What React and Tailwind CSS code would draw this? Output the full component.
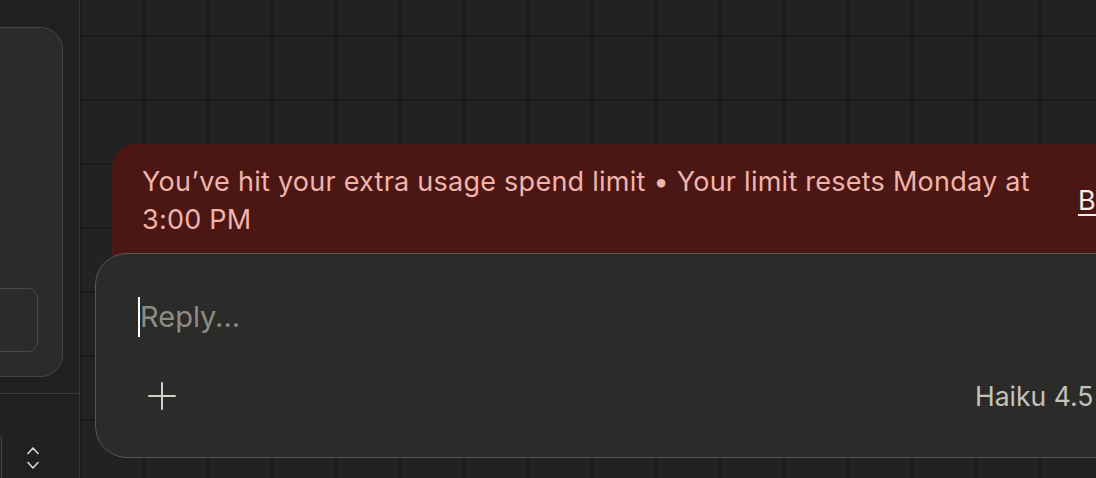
export default function App() {
  return (
    <div className="flex h-[478px] w-[1096px] overflow-hidden bg-[#212121] font-['Inter',sans-serif]">
      {/* left rail */}
      <aside className="flex w-[80px] shrink-0 flex-col border-r border-[#373737] bg-[#202020] pt-[27px]">
        <div className="-ml-[20px] flex h-[350px] w-[83px] shrink-0 flex-col justify-end rounded-[22px] border border-[#454545] bg-[#2b2b2b] pb-[24px]">
          <div className="h-[64px] w-[57px] rounded-[10px] border border-[#4a4a4a]"></div>
        </div>
        <div className="mt-[16px] shrink-0 border-t border-[#383838]"></div>
        <div className="mt-[38px] flex shrink-0 items-start">
          <div className="-ml-[40px] h-[60px] w-[42px] rounded-[8px] border border-[#474747]"></div>
          <svg className="ml-[25px] mt-[14px] text-[#d6d6d0]" width="12" height="24" viewBox="0 0 12 24" fill="none" stroke="currentColor" strokeWidth="1.6" strokeLinecap="round" strokeLinejoin="round">
            <path d="M1 7.5 6 2l5 5.5" />
            <path d="M1 16.5 6 22l5-5.5" />
          </svg>
        </div>
      </aside>

      {/* canvas + composer */}
      <main className="flex flex-1 flex-col bg-[#222222] bg-[linear-gradient(to_right,#1a1a1a_2px,transparent_2px),linear-gradient(to_bottom,#1a1a1a_2px,transparent_2px)] bg-[size:64px_64px] bg-[position:-1px_35px] pt-[144px]">
        <div className="ml-[32px] flex w-[1100px] shrink-0 items-center rounded-t-[24px] bg-[#4a1715] pb-[40px] pl-[30px] pt-[19px]">
          <p className="w-[920px] text-[27px] leading-[38px] tracking-[0.25px] text-[#f1b4aa]">
            You’ve hit your extra usage spend limit • Your limit resets Monday at 3:00 PM
          </p>
          <a href="#" className="ml-[16px] text-[27px] leading-[38px] text-[#f6ece8] underline underline-offset-4">
            Buy more
          </a>
        </div>

        <div className="-mt-[26px] ml-[15px] h-[205px] w-[1120px] shrink-0 rounded-[32px] border border-[#575753] bg-[#2b2b2a]">
          <div className="flex items-center pl-[42px] pt-[43px]">
            <span className="h-[40px] w-[2px] bg-white"></span>
            <span className="text-[29px] leading-[40px] text-[#8d8c86]">Reply...</span>
          </div>
          <div className="mt-[45px] flex h-[28px] items-center pl-[52px]">
            <svg className="text-[#cfcec8]" width="28" height="28" viewBox="0 0 28 28" fill="none" stroke="currentColor" strokeWidth="2" strokeLinecap="round">
              <path d="M14 1v26M1 14h26" />
            </svg>
            <span className="ml-[799px] text-[26.5px] leading-[28px] text-[#c4c3ba]">Haiku 4.5</span>
          </div>
        </div>
      </main>
    </div>
  );
}
